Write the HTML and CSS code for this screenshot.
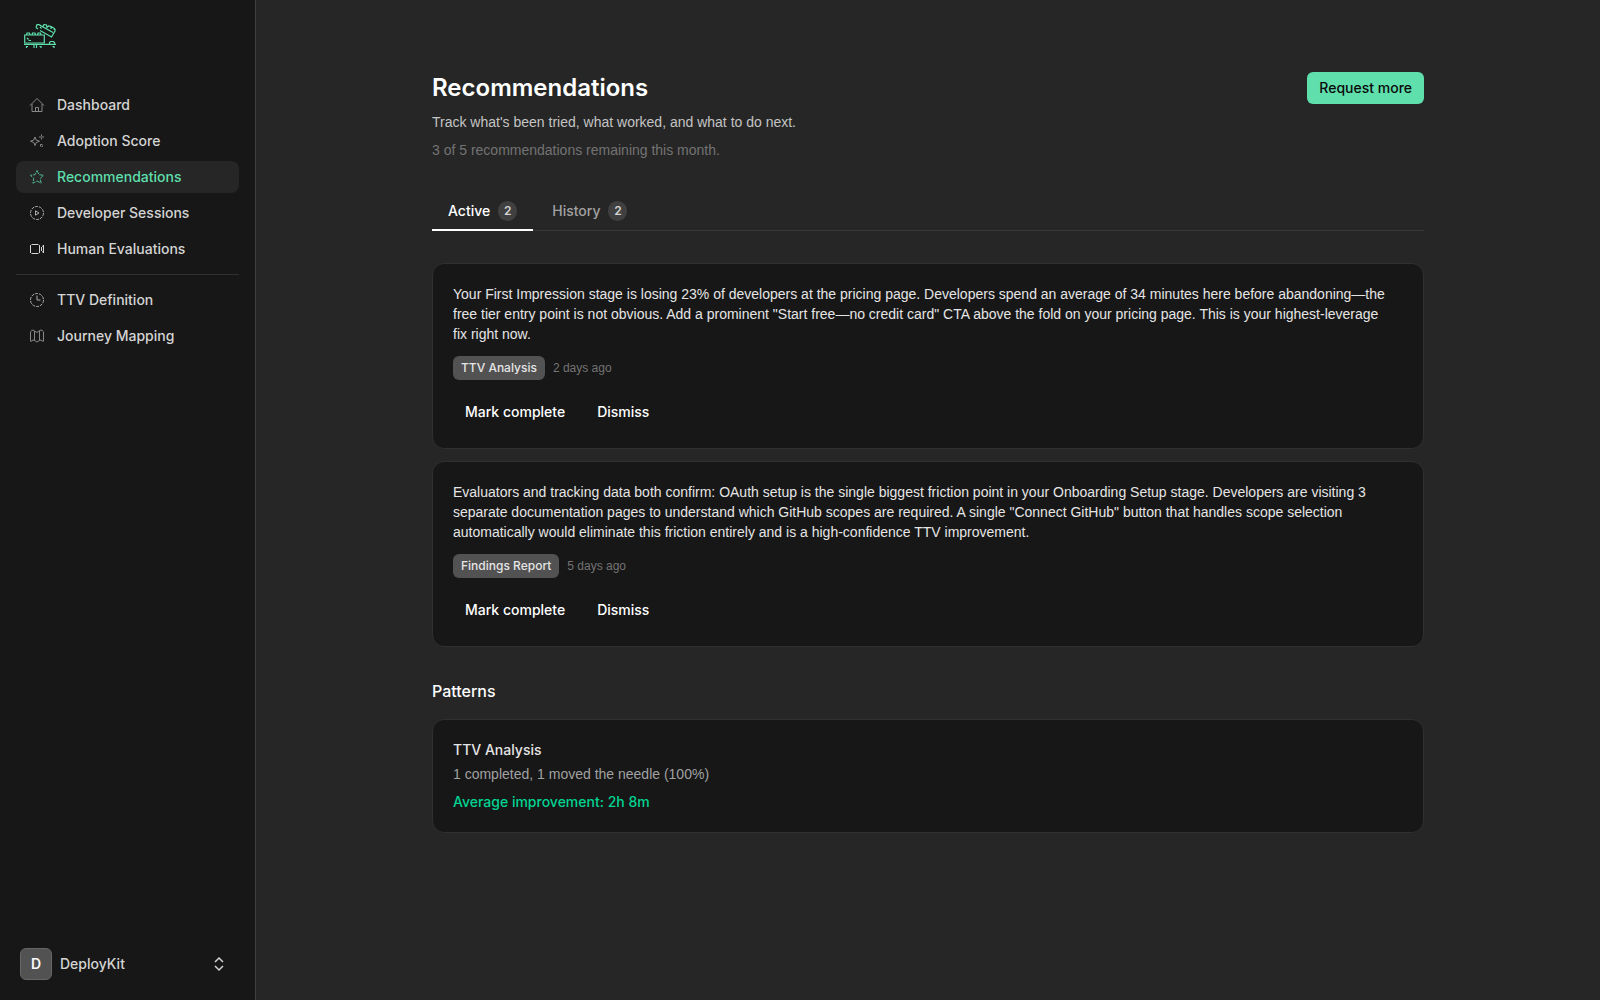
FILE: index.html
```html
<!DOCTYPE html>
<html lang="en">

<head>
    <meta charset="UTF-8">
    <meta name="viewport" content="width=device-width, initial-scale=1.0">
    <title>Recommendations</title>
    <link rel="stylesheet" href="styles.css">
</head>

<body>
    <div class="layout">
        <aside class="sidebar">
            <a class="logo" href="#" aria-label="Home">
                <svg width="32" height="24" viewBox="0 0 32 24">
                    <path d="M.7 11h19.600v8H.7zM2.500 11l.5-2h2.500l.5 2M8 11l.5-2H11l.5 2M13.500 11l.5-2h2.500l.5 2M3 14l1.500 1.500M4.500 16.500H7" />
                    <path d="M0 20.300h32M25.500 20v-1.500l1-1h3l1 1V20M10 20.500V24M12.500 20.500V24M4 22.500H2.500V24M15.500 22.500h1.500V24M28.500 22.500H30V24" />
                    <path d="m12 3.500 1-2.800h2l14 7.800M12 3.500l2 1.500M16 6.500l11.500 6.500L31 7V5.500L29.500 5M16 3l1.500 1.500M19 2.500l1-2 2.500.5.5 3M23.500 3l1-1 2.500.5V5M27 4.500l1-1.500 2.500 1.500V6" />
                </svg>
            </a>

            <nav class="nav" aria-label="Main">
                <a class="nav-item" href="#">
                    <svg class="icon dim" viewBox="0 0 16 16"><path d="m1 8.500 7-7 7 7M3 7v7.500h10V7M6.500 14v-3.500h3V14" /></svg>
                    Dashboard
                </a>
                <a class="nav-item" href="#">
                    <svg class="icon dim" viewBox="0 0 16 16"><path d="m6 4 1.200 3 3.300 1.200-3.300 1.300L6 12.500 4.800 9.500 1.500 8.200 4.800 7z" /><path d="M12.500 1.500v5M10 4h5M11.500 11.500h2v2h-2z" stroke-dasharray="2 1" /></svg>
                    Adoption Score
                </a>
                <a class="nav-item active" href="#" aria-current="page">
                    <svg class="icon" viewBox="0 0 16 16"><path d="m8 1.500 2 4.200 4.500.6-3.300 3.200.9 4.700L8 12l-4.100 2.200.9-4.700L1.500 6.300 6 5.700z" stroke-dasharray="4 1" /></svg>
                    Recommendations
                </a>
                <a class="nav-item" href="#">
                    <svg class="icon" viewBox="0 0 16 16"><circle cx="8" cy="8" r="6.500" stroke-dasharray="3 1" /><path d="m6.500 5.800 3.500 2.200-3.500 2.200z" /></svg>
                    Developer Sessions
                </a>
                <a class="nav-item" href="#">
                    <svg class="icon bright" viewBox="0 0 16 16"><path d="M2.500 3.500h7M2.500 12.500h7M1.500 4v8M10.500 4v8" /><path d="M12.500 6v4M14.500 4v8" /><path d="M13.500 4.500V6M13.500 10v1.500" opacity=".6" /></svg>
                    Human Evaluations
                </a>
                <hr>
                <a class="nav-item" href="#">
                    <svg class="icon" viewBox="0 0 16 16"><circle cx="8" cy="8" r="6.500" stroke-dasharray="3 1" /><path d="M8 3.500V8h3.500" /></svg>
                    TTV Definition
                </a>
                <a class="nav-item" href="#">
                    <svg class="icon dim" viewBox="0 0 16 16"><path d="M1.500 3.500v10M2 3l2-1 1.500 1L8 4.500l2.500-2 1.500-.5 2 1M2 13.500l2-1.500 1.500.5L8 14l2.500-1.500 1.500-.5 2 1.500M5.500 3v9.500M10.500 3v9.500M14.500 3.500v10" /></svg>
                    Journey Mapping
                </a>
            </nav>

            <button class="account" type="button">
                <span class="avatar">D</span>
                <span class="account-name">DeployKit</span>
                <svg class="chevrons" viewBox="0 0 16 16"><path d="m4 6 4-4 4 4M4 10l4 4 4-4" /></svg>
            </button>
        </aside>

        <main class="main">
            <div class="container">
                <header class="header">
                    <div class="header-text">
                        <h1>Recommendations</h1>
                        <p class="subtitle">Track what's been tried, what worked, and what to do next.</p>
                        <p class="remaining">3 of 5 recommendations remaining this month.</p>
                    </div>
                    <button class="btn primary" type="button">Request more</button>
                </header>

                <div class="tabs" role="tablist">
                    <button class="tab selected" type="button" role="tab" aria-selected="true">Active <span class="count">2</span></button>
                    <button class="tab" type="button" role="tab" aria-selected="false">History <span class="count">2</span></button>
                </div>

                <div class="cards">
                    <article class="card">
                        <p class="card-text">Your First Impression stage is losing 23% of developers at the pricing page. Developers spend an average of 34 minutes here before abandoning—the free tier entry point is not obvious. Add a prominent "Start free—no credit card" CTA above the fold on your pricing page. This is your highest-leverage<br> fix right now.</p>
                        <div class="meta">
                            <span class="tag">TTV Analysis</span>
                            <span class="date">2 days ago</span>
                        </div>
                        <div class="actions">
                            <button class="btn" type="button">Mark complete</button>
                            <button class="btn" type="button">Dismiss</button>
                        </div>
                    </article>
                    <article class="card">
                        <p class="card-text">Evaluators and tracking data both confirm: OAuth setup is the single biggest friction point in your Onboarding Setup stage. Developers are visiting 3 separate documentation pages to understand which GitHub scopes are required. A single "Connect GitHub" button that handles scope selection automatically would eliminate this friction entirely and is a high-confidence TTV improvement.</p>
                        <div class="meta">
                            <span class="tag">Findings Report</span>
                            <span class="date">5 days ago</span>
                        </div>
                        <div class="actions">
                            <button class="btn" type="button">Mark complete</button>
                            <button class="btn" type="button">Dismiss</button>
                        </div>
                    </article>
                </div>

                <section class="patterns">
                    <h2>Patterns</h2>
                    <div class="card">
                        <h3>TTV Analysis</h3>
                        <p class="result">1 completed, 1 moved the needle (100%)</p>
                        <p class="improvement">Average improvement: 2h 8m</p>
                    </div>
                </section>
            </div>
        </main>
    </div>
</body>

</html>
```

FILE: styles.css
```css
* {
    margin: 0;
    padding: 0;
    box-sizing: border-box;
}

body {
    background: #262626;
    color: #e5e5e5;
    font-family: Inter, "Liberation Sans", sans-serif;
    font-size: 14px;
    line-height: 20px;
}

button {
    font: inherit;
    color: inherit;
    background: none;
    border: none;
    cursor: pointer;
}

svg {
    fill: none;
    stroke: currentColor;
}

.layout {
    display: flex;
    min-height: 100vh;
}

/* Sidebar */
.sidebar {
    display: flex;
    flex-direction: column;
    flex: none;
    width: 256px;
    background: #171717;
    border-right: 1px solid #404040;
}

.logo {
    height: 24px;
    margin: 24px 24px 41px;
    color: #5edfac;
    stroke-width: 1.2;
}

.nav {
    display: flex;
    flex-direction: column;
    gap: 4px;
    padding: 0 16px;
}

.nav-item {
    display: flex;
    align-items: center;
    gap: 12px;
    height: 32px;
    padding: 0 13px;
    border-radius: 8px;
    color: #d4d4d4;
    font-weight: 500;
    text-decoration: none;
}

.nav-item.active {
    background: #262626;
    color: #5edfac;
}

.nav hr {
    margin: 5px 0;
    border: none;
    border-top: 1px solid #303030;
}

.icon {
    width: 16px;
    height: 16px;
    opacity: 0.8;
}

.icon.dim {
    opacity: 0.6;
}

.icon.bright {
    opacity: 1;
}

.account {
    display: flex;
    align-items: center;
    gap: 8px;
    margin-top: auto;
    padding: 20px 28px 20px 20px;
    color: #d4d4d4;
    font-weight: 500;
    text-align: left;
}

.avatar {
    display: flex;
    align-items: center;
    justify-content: center;
    width: 32px;
    height: 32px;
    background: #525252;
    border: 1px solid #666;
    border-radius: 6px;
    color: #fafafa;
    font-weight: 600;
}

.account-name {
    flex: 1;
}

.chevrons {
    width: 16px;
    height: 16px;
    stroke-width: 1.5;
}

/* Content */
.main {
    flex: 1;
    min-width: 0;
    padding: 72px 32px;
}

.container {
    max-width: 992px;
    margin: 0 auto;
}

.header {
    display: flex;
    align-items: flex-start;
    justify-content: space-between;
}

.header-text {
    display: flex;
    flex-direction: column;
    gap: 8px;
}

h1 {
    color: #fff;
    font-size: 24px;
    font-weight: 600;
    line-height: 32px;
}

.subtitle,
.remaining,
.card-text,
.date,
.result {
    font-family: "Liberation Sans", Arial, sans-serif;
}

.subtitle {
    color: #c4c4c4;
}

.remaining {
    color: #737373;
}

.btn {
    height: 32px;
    padding: 0 12px;
    border-radius: 6px;
    color: #fff;
    font-weight: 500;
}

.btn.primary {
    background: #5edfac;
    color: #0a0a0a;
}

.tabs {
    display: flex;
    gap: 3px;
    margin: 32px 0;
    border-bottom: 1px solid #383838;
}

.tab {
    display: flex;
    align-items: center;
    gap: 8px;
    height: 39px;
    margin-bottom: -1px;
    padding: 0 16px;
    border-bottom: 2px solid transparent;
    color: #a1a1a1;
    font-weight: 500;
}

.tab.selected {
    border-bottom-color: #fff;
    color: #fff;
}

.count {
    width: 19px;
    height: 20px;
    background: #404040;
    border-radius: 10px;
    color: #d4d4d4;
    font-size: 12px;
    font-weight: 600;
}

.cards {
    display: flex;
    flex-direction: column;
    gap: 12px;
}

.card {
    padding: 20px;
    background: #171717;
    border: 1px solid #303030;
    border-radius: 12px;
}

.meta {
    display: flex;
    align-items: center;
    gap: 8px;
    margin: 12px 0 16px;
    font-size: 12px;
}

.tag {
    padding: 2px 8px;
    background: #525252;
    border-radius: 6px;
    font-weight: 500;
}

.date {
    color: #737373;
}

.actions {
    display: flex;
    gap: 8px;
}

.patterns {
    margin-top: 32px;
}

h2 {
    margin-bottom: 16px;
    color: #fff;
    font-size: 16px;
    font-weight: 500;
    line-height: 24px;
}

h3 {
    font-size: 14px;
    font-weight: 500;
}

.result {
    margin: 4px 0 8px;
    color: #a1a1a1;
}

.improvement {
    color: #00d492;
    font-weight: 500;
}
```
